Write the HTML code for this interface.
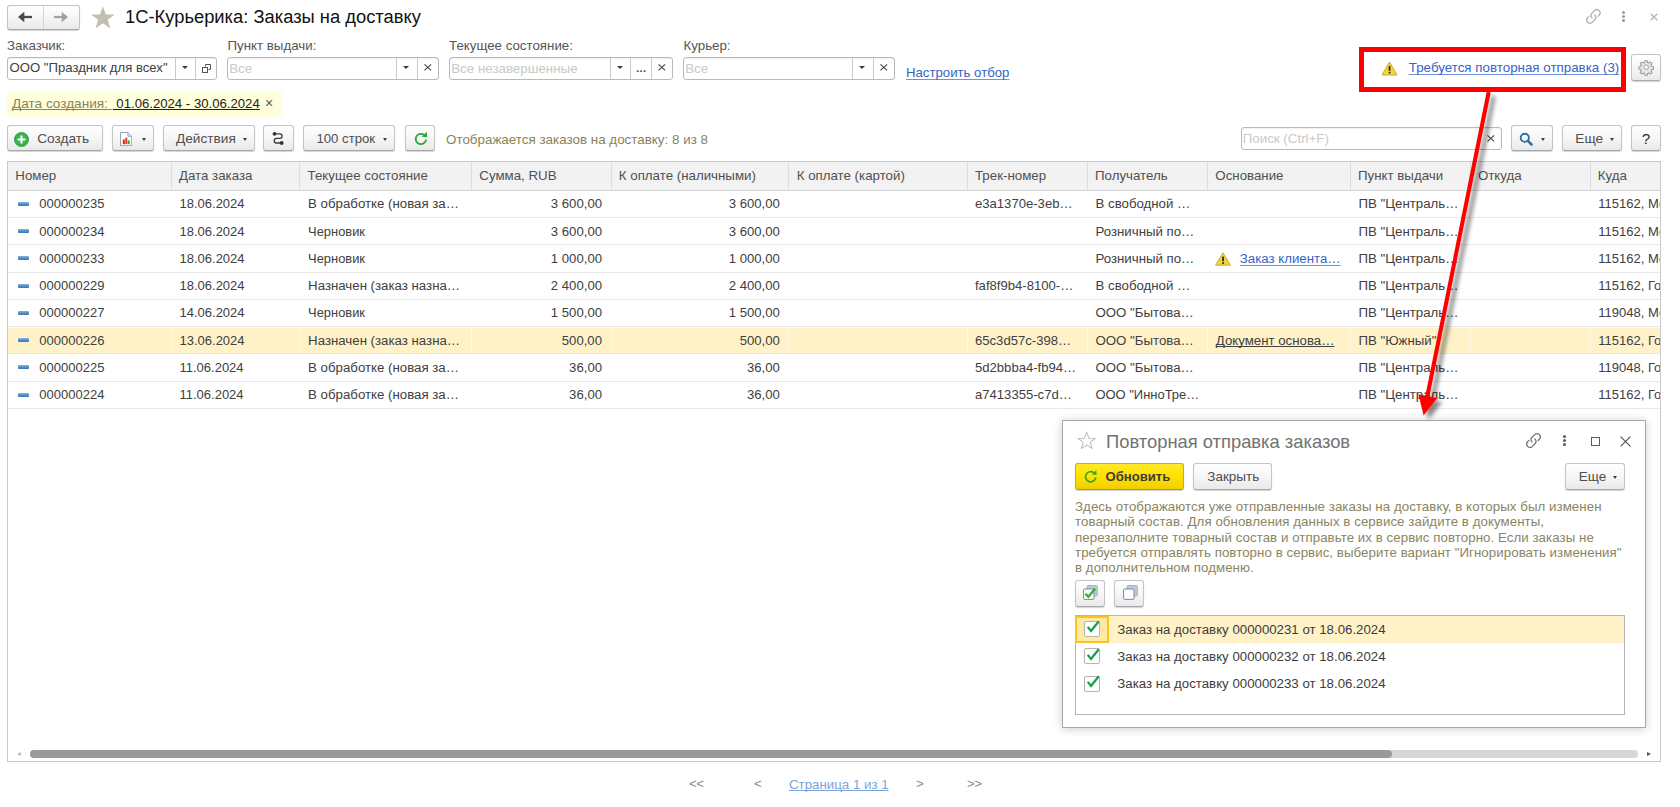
<!DOCTYPE html>
<html lang="ru">
<head>
<meta charset="utf-8">
<title>1С-Курьерика: Заказы на доставку</title>
<style>
*{box-sizing:border-box;margin:0;padding:0;text-decoration-skip-ink:none}
html,body{width:1680px;height:807px;overflow:hidden;background:#fff}
body{font-family:"Liberation Sans",sans-serif;font-size:13.3px;color:#333;position:relative}
.abs{position:absolute}
.btn{position:absolute;border:1px solid #c4c4c4;border-bottom-color:#a9a9a9;border-radius:3px;background:linear-gradient(#ffffff 0%,#f6f6f6 50%,#e9e9e9 100%);box-shadow:0 1px 1px rgba(0,0,0,.18);color:#4e4e4e;white-space:nowrap}
.btn .t{position:absolute;top:0;line-height:25.6px;height:24px}
.tri{position:absolute;width:0;height:0;border-left:3px solid transparent;border-right:3px solid transparent;border-top:3.8px solid #3c3c3c;margin-left:-.4px}
.tri.s{border-left-width:2.8px;border-right-width:2.8px;border-top-width:3.3px}
.xs{position:absolute;overflow:visible}
.xs path{stroke:#484848;stroke-width:1.2;fill:none}
.lbl{position:absolute;color:#555;font-size:13.3px;line-height:16px;white-space:nowrap}
.inp{position:absolute;height:23px;border:1px solid #b9b9b9;border-radius:3px;background:#fff;box-shadow:inset 0 1px 1px rgba(0,0,0,.06)}
.inp .v{position:absolute;left:3px;top:0;line-height:20.4px;white-space:nowrap;color:#404040;font-size:13.15px}
.inp .ph{color:#c9c9c9;font-size:13.35px;line-height:22.4px}
.inp .sep{position:absolute;top:0;bottom:0;width:1px;background:#c9c9c9}
.inp .x{position:absolute;top:0;line-height:20px;font-size:15px;color:#555;width:20px;text-align:center}
.lnk{color:#3465c6;text-decoration:underline;text-underline-offset:1.6px;text-decoration-thickness:1px;text-decoration-color:rgba(52,101,198,.7);cursor:pointer}
.title{position:absolute;left:125px;top:5.4px;font-size:18.35px;line-height:24px;color:#111;white-space:nowrap}
/* table */
.tbl{position:absolute;left:7px;top:161px;width:1654px;height:601px;overflow:hidden;background:#fff}
.tbl:after{content:"";position:absolute;left:0;top:0;right:0;bottom:0;border:1px solid #c8c8c8;pointer-events:none}
.thead{position:absolute;left:0;top:0;width:1654px;height:30px;background:#f2f2f2;border-bottom:1px solid #d2d2d2}
.th{position:absolute;top:0;height:29px;line-height:29.5px;padding-left:7.3px;color:#505050;white-space:nowrap;overflow:hidden;border-left:1px solid #dedede;font-size:13.3px}
.tr{position:absolute;left:0;width:1654px;border-bottom:1px solid #e8e8e8}
.tr.sel{background:#fff2c9;border-bottom-color:#f5e8bd;box-shadow:inset 0 1px 0 #fffaf0}
.td{position:absolute;top:0;height:100%;padding-left:8.8px;white-space:nowrap;overflow:hidden;color:#404040;font-size:13.25px}
.td.sm{font-size:12.9px}
.td.sm2{font-size:12.95px}
.tr.sel .td{box-shadow:inset 1px 0 0 #fff9e6}
.td.r{text-align:right;padding-right:8.5px;padding-left:0;font-size:13.15px}
.td.d,.td.c0{font-size:13px}
.td.tk{font-size:13.1px;padding-left:8.3px}
.ricon{position:absolute;left:11.4px;top:10.5px;width:10.2px;height:4.6px;border-radius:1px;background:linear-gradient(#86b6e0 0%,#5b93cb 45%,#3a73ae 100%)}
.num{position:absolute;left:32.3px}
.warn{position:absolute;left:8px;top:6.5px}
.ul{text-decoration:underline}
.pg{color:#8a8a8a;font-size:13.3px;line-height:16px;white-space:nowrap;letter-spacing:-.5px}
.cb{position:absolute;left:7.8px;width:16px;height:16px;border:1px solid #b4b4b4;border-radius:2px;background:#fff}
.cb svg{position:absolute;left:.8px;top:-1.8px;overflow:visible}
.li{position:absolute;left:41.3px;line-height:17px;white-space:nowrap;color:#3c3c3c;font-size:13.26px}
</style>
</head>
<body>
<!-- navigation -->
<div class="btn" style="left:7px;top:5px;width:73px;height:24.5px">
  <div class="abs" style="left:34.5px;top:0;width:1px;height:23px;background:#d2d2d2"></div>
  <svg class="abs" style="left:9px;top:5px" width="16" height="12" viewBox="0 0 16 12"><path d="M15 6H5" fill="none" stroke="#484848" stroke-width="2.3"/><path d="M7.3 .8v10.4L1 6z" fill="#484848"/></svg>
  <svg class="abs" style="left:45.3px;top:5px" width="16" height="12" viewBox="0 0 16 12"><path d="M1 6h10" fill="none" stroke="#a2a2a2" stroke-width="2.3"/><path d="M8.7 .8v10.4L15 6z" fill="#a2a2a2"/></svg>
</div>
<svg class="abs" style="left:90.2px;top:5.2px" width="25.8" height="24.8" viewBox="0 0 25 24"><path d="M12.5 1.4l2.9 7.9h8.6l-6.9 5.1 2.6 8.3-7.2-5-7.2 5 2.6-8.3L1 9.3h8.6z" fill="#c2beb0"/></svg>
<div class="title">1С-Курьерика: Заказы на доставку</div>

<!-- top-right window icons -->
<svg class="abs" style="left:1584.2px;top:7.2px" width="18.8" height="18.8" viewBox="0 0 17 17"><g fill="none" stroke="#b4b4b4" stroke-width="1.2" stroke-linecap="round"><path d="M7.2 9.8a3 3 0 0 1 0-4.2l2.6-2.6a3 3 0 0 1 4.2 4.2l-1.3 1.3"/><path d="M9.8 7.2a3 3 0 0 1 0 4.2l-2.6 2.6a3 3 0 0 1-4.2-4.2l1.3-1.3"/></g></svg>
<div class="abs" style="left:1622px;top:11px;width:3px;height:3px;border-radius:50%;background:#9a9a9a;box-shadow:0 4px 0 #9a9a9a,0 8px 0 #9a9a9a"></div>
<svg class="abs" style="left:1650px;top:13px" width="8" height="8" viewBox="0 0 8 8"><path d="M.7.7l6.6 6.6M7.3.7L.7 7.3" stroke="#b5b5b5" stroke-width="1.3"/></svg>

<!-- filters -->
<div class="lbl" style="left:7px;top:38px">Заказчик:</div>
<div class="inp" style="left:7px;top:57px;width:210px">
  <span class="v" style="left:1.5px">ООО "Праздник для всех"</span>
  <span class="sep" style="left:167px"></span><span class="tri" style="left:174.4px;top:8px"></span>
  <span class="sep" style="left:187px"></span>
  <svg class="abs" style="left:192.5px;top:5px" width="11" height="11" viewBox="0 0 11 11"><path d="M4.5 3.5V1.5h5v5H7.5" fill="none" stroke="#555" stroke-width="1"/><rect x="1.5" y="4.5" width="5" height="5" fill="#fff" stroke="#555" stroke-width="1"/></svg>
</div>
<div class="lbl" style="left:227.5px;top:38px">Пункт выдачи:</div>
<div class="inp" style="left:227px;top:57px;width:212px">
  <span class="v ph" style="left:1.2px">Все</span>
  <span class="sep" style="left:168px"></span><span class="tri" style="left:175.5px;top:8px"></span>
  <span class="sep" style="left:189px"></span><svg class="xs" style="left:195.8px;top:6px" width="7.6" height="6.8" viewBox="0 0 8 7"><path d="M.5.3l7 6.4M7.5.3l-7 6.4"/></svg>
</div>
<div class="lbl" style="left:449px;top:38px">Текущее состояние:</div>
<div class="inp" style="left:449px;top:57px;width:224px">
  <span class="v ph" style="left:1.2px">Все незавершенные</span>
  <span class="sep" style="left:160px"></span><span class="tri" style="left:167.5px;top:8px"></span>
  <span class="sep" style="left:180px"></span><span class="abs" style="left:186.2px;top:4.3px;font-weight:bold;font-size:11px;line-height:12px;color:#444;letter-spacing:.3px">...</span>
  <span class="sep" style="left:201px"></span><svg class="xs" style="left:207.8px;top:6px" width="7.6" height="6.8" viewBox="0 0 8 7"><path d="M.5.3l7 6.4M7.5.3l-7 6.4"/></svg>
</div>
<div class="lbl" style="left:683.5px;top:38px">Курьер:</div>
<div class="inp" style="left:683px;top:57px;width:211.5px">
  <span class="v ph" style="left:1.2px">Все</span>
  <span class="sep" style="left:168px"></span><span class="tri" style="left:175.5px;top:8px"></span>
  <span class="sep" style="left:188.5px"></span><svg class="xs" style="left:195.5px;top:6px" width="7.6" height="6.8" viewBox="0 0 8 7"><path d="M.5.3l7 6.4M7.5.3l-7 6.4"/></svg>
</div>
<a class="lnk abs" style="left:906px;top:64.5px;line-height:16px;white-space:nowrap;font-size:13.2px">Настроить отбор</a>

<!-- highlighted link -->
<div class="abs" style="left:1359px;top:47px;width:267px;height:45px;border:5px solid #fe0000"></div>
<svg class="abs" style="left:1381px;top:61px" width="17" height="15" viewBox="0 0 17 15"><path d="M8.5 1L16 14H1z" fill="#f3d63c" stroke="#c8a91f" stroke-width="1" stroke-linejoin="round"/><rect x="7.7" y="5" width="1.7" height="4.8" fill="#222"/><rect x="7.7" y="10.8" width="1.7" height="1.7" fill="#222"/></svg>
<a class="lnk abs" style="left:1408.8px;top:60px;line-height:16px;white-space:nowrap;font-size:13.35px">Требуется повторная отправка (3)</a>
<div class="btn" style="left:1631px;top:54px;width:30px;height:26.5px">
  <svg class="abs" style="left:6.2px;top:4.3px" width="16.4" height="16.4" viewBox="0 0 24 24"><path fill="#e6e6e6" stroke="#9a9a9a" stroke-width="1.5" stroke-linejoin="round" d="M10.3 2.5h3.4l.5 2.7 1.9.8 2.3-1.6 2.4 2.4-1.6 2.3.8 1.9 2.7.5v3.4l-2.7.5-.8 1.9 1.6 2.3-2.4 2.4-2.3-1.6-1.9.8-.5 2.7h-3.4l-.5-2.7-1.9-.8-2.3 1.6-2.4-2.4 1.6-2.3-.8-1.9-2.7-.5v-3.4l2.7-.5.8-1.9-1.6-2.3 2.4-2.4 2.3 1.6 1.9-.8z"/><circle cx="12" cy="12" r="3.4" fill="#f6f6f6" stroke="#a0a0a0" stroke-width="1.4"/></svg>
</div>

<!-- date filter chip -->
<div class="abs" style="left:7px;top:90.5px;width:275px;height:26px;background:#ffffdc"></div>
<div class="abs" style="left:12px;top:95px;line-height:16px;white-space:pre;font-size:13.6px"><span style="color:#8a8258;text-decoration:underline">Дата создания: </span><span style="color:#222;text-decoration:underline;font-size:13.17px;margin-left:1px"> 01.06.2024 - 30.06.2024</span><span style="color:#555;font-size:14px;margin-left:1.5px"> ×</span></div>

<!-- toolbar -->
<div class="btn" style="left:7px;top:125px;width:95.5px;height:26px">
  <svg class="abs" style="left:5.7px;top:5.6px" width="15" height="15" viewBox="0 0 15 15"><circle cx="7.5" cy="7.5" r="7.3" fill="#3bb44e"/><circle cx="7.5" cy="7.5" r="6.8" fill="none" stroke="#2e9f42" stroke-width=".9"/><path d="M7.5 3.6v7.8M3.6 7.5h7.8" stroke="#fff" stroke-width="2"/></svg>
  <span class="t" style="left:29.2px;font-size:13.65px">Создать</span>
</div>
<div class="btn" style="left:111.5px;top:125px;width:42.5px;height:26px">
  <svg class="abs" style="left:7.3px;top:5.8px" width="12.2" height="14.1" viewBox="0 0 13 15"><path d="M.5.5h8l4 4v10H.5z" fill="#fff" stroke="#8c9bb0" stroke-width="1"/><path d="M8.5.5v4h4" fill="#e4e9f0" stroke="#8c9bb0" stroke-width="1"/><rect x="3" y="8" width="2.2" height="5" fill="#d9281c"/><rect x="5.6" y="6" width="2.2" height="7" fill="#e0482a"/><rect x="8.2" y="9" width="2.2" height="4" fill="#3aa335"/></svg>
  <span class="tri s" style="left:29.5px;top:11.5px"></span>
</div>
<div class="btn" style="left:162.5px;top:125px;width:92px;height:26px">
  <span class="t" style="left:12.5px;font-size:13.65px">Действия</span><span class="tri s" style="left:80px;top:11.5px"></span>
</div>
<div class="btn" style="left:263px;top:125px;width:30.5px;height:26px">
  <svg class="abs" style="left:8.3px;top:4.7px" width="13" height="15" viewBox="0 0 13 15"><path d="M2.4 2.8h5.4a2.3 2.3 0 0 1 0 4.6H4.5a2.3 2.3 0 0 0 0 4.6h5.2" fill="none" stroke="#3a3a3a" stroke-width="1.3"/><circle cx="2.5" cy="2.8" r="1.9" fill="#333"/><circle cx="9.7" cy="12" r="1.9" fill="#333"/></svg>
</div>
<div class="btn" style="left:302.5px;top:125px;width:92px;height:26px">
  <span class="t" style="left:13px;font-size:13.15px">100 строк</span><span class="tri s" style="left:80px;top:11.5px"></span>
</div>
<div class="btn" style="left:405px;top:125px;width:30px;height:26px">
  <svg class="abs" style="left:7px;top:4.5px" width="16" height="16" viewBox="0 0 16 16"><path d="M13.1 8.6A5.2 5.2 0 1 1 11 3.8" fill="none" stroke="#2ca53a" stroke-width="1.8"/><path d="M8.8 5.7L14.2 6.3 13.7 .8z" fill="#2ca53a"/></svg>
</div>
<div class="abs" style="left:446px;top:131.5px;line-height:16px;white-space:nowrap;color:#8a8258;font-size:13.4px">Отображается заказов на доставку: 8 из 8</div>

<div class="inp" style="left:1240.5px;top:127px;width:261px;height:23px">
  <span class="v ph" style="left:1.2px;line-height:22.4px">Поиск (Ctrl+F)</span>
  <svg class="xs" style="left:245.5px;top:6.8px" width="7.6" height="6.8" viewBox="0 0 8 7"><path d="M.5.3l7 6.4M7.5.3l-7 6.4"/></svg>
</div>
<div class="btn" style="left:1510.5px;top:125px;width:42px;height:26px">
  <svg class="abs" style="left:7.2px;top:6px" width="15" height="15" viewBox="0 0 15 15"><circle cx="5.8" cy="5.8" r="4.1" fill="none" stroke="#2b6ca3" stroke-width="1.9"/><path d="M8.9 8.9l3.6 3.6" stroke="#2b6ca3" stroke-width="2.5" stroke-linecap="round"/></svg>
  <span class="tri s" style="left:29.5px;top:11.5px"></span>
</div>
<div class="btn" style="left:1562px;top:125px;width:60px;height:26px">
  <span class="t" style="left:12.3px;font-size:13.65px">Еще</span><span class="tri s" style="left:47px;top:11.5px"></span>
</div>
<div class="btn" style="left:1631px;top:125px;width:30px;height:26px">
  <span class="t" style="left:0;width:28px;text-align:center;font-weight:normal;color:#2e2e2e;font-size:15.3px;line-height:25px">?</span>
</div>
<div class="tbl">
<div class="thead"></div>
<div class="th" style="left:0px;width:163.7px">Номер</div>
<div class="th" style="left:163.7px;width:128.6px">Дата заказа</div>
<div class="th" style="left:292.3px;width:171.7px">Текущее состояние</div>
<div class="th" style="left:464px;width:139.5px">Сумма, RUB</div>
<div class="th" style="left:603.5px;width:177.9px">К оплате (наличными)</div>
<div class="th" style="left:781.4px;width:178.3px">К оплате (картой)</div>
<div class="th" style="left:959.7px;width:120px">Трек-номер</div>
<div class="th" style="left:1079.7px;width:120.3px">Получатель</div>
<div class="th" style="left:1200px;width:142.7px">Основание</div>
<div class="th" style="left:1342.7px;width:119.9px">Пункт выдачи</div>
<div class="th" style="left:1462.6px;width:119.9px">Откуда</div>
<div class="th" style="left:1582.5px;width:71px">Куда</div>
<div class="tr" style="top:30px;height:27px;line-height:25.9px">
<div class="td c0" style="left:0px;width:163.7px"><i class="ricon"></i><span class="num">000000235</span></div>
<div class="td d" style="left:163.7px;width:128.6px">18.06.2024</div>
<div class="td " style="left:292.3px;width:171.7px">В обработке (новая за…</div>
<div class="td r" style="left:464px;width:139.5px">3 600,00</div>
<div class="td r" style="left:603.5px;width:177.9px">3 600,00</div>
<div class="td " style="left:781.4px;width:178.3px"></div>
<div class="td tk" style="left:959.7px;width:120px">e3a1370e-3eb…</div>
<div class="td " style="left:1079.7px;width:120.3px">В свободной …</div>
<div class="td " style="left:1200px;width:142.7px"></div>
<div class="td " style="left:1342.7px;width:119.9px">ПВ "Централь…</div>
<div class="td " style="left:1462.6px;width:119.9px"></div>
<div class="td last d" style="left:1582.5px;width:71px">115162, Мо</div>
</div>
<div class="tr" style="top:57px;height:27px;line-height:27.7px">
<div class="td c0" style="left:0px;width:163.7px"><i class="ricon"></i><span class="num">000000234</span></div>
<div class="td d" style="left:163.7px;width:128.6px">18.06.2024</div>
<div class="td sm" style="left:292.3px;width:171.7px">Черновик</div>
<div class="td r" style="left:464px;width:139.5px">3 600,00</div>
<div class="td r" style="left:603.5px;width:177.9px">3 600,00</div>
<div class="td " style="left:781.4px;width:178.3px"></div>
<div class="td tk" style="left:959.7px;width:120px"></div>
<div class="td " style="left:1079.7px;width:120.3px">Розничный по…</div>
<div class="td " style="left:1200px;width:142.7px"></div>
<div class="td " style="left:1342.7px;width:119.9px">ПВ "Централь…</div>
<div class="td " style="left:1462.6px;width:119.9px"></div>
<div class="td last d" style="left:1582.5px;width:71px">115162, Мо</div>
</div>
<div class="tr" style="top:84px;height:28px;line-height:27.9px">
<div class="td c0" style="left:0px;width:163.7px"><i class="ricon"></i><span class="num">000000233</span></div>
<div class="td d" style="left:163.7px;width:128.6px">18.06.2024</div>
<div class="td sm" style="left:292.3px;width:171.7px">Черновик</div>
<div class="td r" style="left:464px;width:139.5px">1 000,00</div>
<div class="td r" style="left:603.5px;width:177.9px">1 000,00</div>
<div class="td " style="left:781.4px;width:178.3px"></div>
<div class="td tk" style="left:959.7px;width:120px"></div>
<div class="td " style="left:1079.7px;width:120.3px">Розничный по…</div>
<div class="td base" style="left:1200px;width:142.7px"><svg class="warn" viewBox="0 0 16 14" width="16" height="14"><path d="M8 0.8 L15.4 13.2 H0.6 Z" fill="#f2d43a" stroke="#c9a81c" stroke-width="0.9" stroke-linejoin="round"/><rect x="7.2" y="4.6" width="1.7" height="4.6" fill="#222"/><rect x="7.2" y="10.2" width="1.7" height="1.7" fill="#222"/></svg><a class="lnk" style="margin-left:24px">Заказ клиента…</a></div>
<div class="td " style="left:1342.7px;width:119.9px">ПВ "Централь…</div>
<div class="td " style="left:1462.6px;width:119.9px"></div>
<div class="td last d" style="left:1582.5px;width:71px">115162, Мо</div>
</div>
<div class="tr" style="top:112px;height:27px;line-height:25.5px">
<div class="td c0" style="left:0px;width:163.7px"><i class="ricon"></i><span class="num">000000229</span></div>
<div class="td d" style="left:163.7px;width:128.6px">18.06.2024</div>
<div class="td " style="left:292.3px;width:171.7px">Назначен (заказ назна…</div>
<div class="td r" style="left:464px;width:139.5px">2 400,00</div>
<div class="td r" style="left:603.5px;width:177.9px">2 400,00</div>
<div class="td " style="left:781.4px;width:178.3px"></div>
<div class="td tk" style="left:959.7px;width:120px">faf8f9b4-8100-…</div>
<div class="td " style="left:1079.7px;width:120.3px">В свободной …</div>
<div class="td " style="left:1200px;width:142.7px"></div>
<div class="td " style="left:1342.7px;width:119.9px">ПВ "Централь…</div>
<div class="td " style="left:1462.6px;width:119.9px"></div>
<div class="td last d" style="left:1582.5px;width:71px">115162, Го</div>
</div>
<div class="tr" style="top:139px;height:27px;line-height:25.5px">
<div class="td c0" style="left:0px;width:163.7px"><i class="ricon"></i><span class="num">000000227</span></div>
<div class="td d" style="left:163.7px;width:128.6px">14.06.2024</div>
<div class="td sm" style="left:292.3px;width:171.7px">Черновик</div>
<div class="td r" style="left:464px;width:139.5px">1 500,00</div>
<div class="td r" style="left:603.5px;width:177.9px">1 500,00</div>
<div class="td " style="left:781.4px;width:178.3px"></div>
<div class="td tk" style="left:959.7px;width:120px"></div>
<div class="td " style="left:1079.7px;width:120.3px">ООО "Бытова…</div>
<div class="td " style="left:1200px;width:142.7px"></div>
<div class="td " style="left:1342.7px;width:119.9px">ПВ "Централь…</div>
<div class="td " style="left:1462.6px;width:119.9px"></div>
<div class="td last d" style="left:1582.5px;width:71px">119048, Мо</div>
</div>
<div class="tr sel" style="top:166px;height:27px;line-height:27.7px">
<div class="td c0" style="left:0px;width:163.7px"><i class="ricon"></i><span class="num">000000226</span></div>
<div class="td d" style="left:163.7px;width:128.6px">13.06.2024</div>
<div class="td " style="left:292.3px;width:171.7px">Назначен (заказ назна…</div>
<div class="td r" style="left:464px;width:139.5px">500,00</div>
<div class="td r" style="left:603.5px;width:177.9px">500,00</div>
<div class="td " style="left:781.4px;width:178.3px"></div>
<div class="td tk" style="left:959.7px;width:120px">65c3d57c-398…</div>
<div class="td " style="left:1079.7px;width:120.3px">ООО "Бытова…</div>
<div class="td " style="left:1200px;width:142.7px"><span class="ul">Документ основа…</span></div>
<div class="td " style="left:1342.7px;width:119.9px">ПВ "Южный"</div>
<div class="td " style="left:1462.6px;width:119.9px"></div>
<div class="td last d" style="left:1582.5px;width:71px">115162, Го</div>
</div>
<div class="tr" style="top:193px;height:28px;line-height:28.1px">
<div class="td c0" style="left:0px;width:163.7px"><i class="ricon"></i><span class="num">000000225</span></div>
<div class="td d" style="left:163.7px;width:128.6px">11.06.2024</div>
<div class="td " style="left:292.3px;width:171.7px">В обработке (новая за…</div>
<div class="td r" style="left:464px;width:139.5px">36,00</div>
<div class="td r" style="left:603.5px;width:177.9px">36,00</div>
<div class="td " style="left:781.4px;width:178.3px"></div>
<div class="td tk" style="left:959.7px;width:120px">5d2bbba4-fb94…</div>
<div class="td " style="left:1079.7px;width:120.3px">ООО "Бытова…</div>
<div class="td " style="left:1200px;width:142.7px"></div>
<div class="td " style="left:1342.7px;width:119.9px">ПВ "Централь…</div>
<div class="td " style="left:1462.6px;width:119.9px"></div>
<div class="td last d" style="left:1582.5px;width:71px">119048, Го</div>
</div>
<div class="tr" style="top:221px;height:27px;line-height:25.3px">
<div class="td c0" style="left:0px;width:163.7px"><i class="ricon"></i><span class="num">000000224</span></div>
<div class="td d" style="left:163.7px;width:128.6px">11.06.2024</div>
<div class="td " style="left:292.3px;width:171.7px">В обработке (новая за…</div>
<div class="td r" style="left:464px;width:139.5px">36,00</div>
<div class="td r" style="left:603.5px;width:177.9px">36,00</div>
<div class="td " style="left:781.4px;width:178.3px"></div>
<div class="td tk" style="left:959.7px;width:120px">a7413355-c7d…</div>
<div class="td sm2" style="left:1079.7px;width:120.3px">ООО "ИнноТре…</div>
<div class="td " style="left:1200px;width:142.7px"></div>
<div class="td " style="left:1342.7px;width:119.9px">ПВ "Централь…</div>
<div class="td " style="left:1462.6px;width:119.9px"></div>
<div class="td last d" style="left:1582.5px;width:71px">115162, Го</div>
</div>
</div><!-- scrollbar + pager -->
<div class="abs" style="left:30px;top:750px;width:1608px;height:8px;border-radius:4px;background:#d7d7d7"></div>
<div class="abs" style="left:30px;top:750px;width:1362px;height:8px;border-radius:4px;background:#9a9a9a"></div>
<div class="abs" style="left:16.5px;top:751.5px;width:0;height:0;border-top:2.5px solid transparent;border-bottom:2.5px solid transparent;border-right:4px solid #bdbdbd"></div>
<div class="abs" style="left:1647px;top:752px;width:0;height:0;border-top:2.5px solid transparent;border-bottom:2.5px solid transparent;border-left:4px solid #555"></div>

<div class="abs pg" style="left:689px;top:775.5px">&lt;&lt;</div>
<div class="abs pg" style="left:754px;top:775.5px">&lt;</div>
<a class="abs" style="left:789px;top:777px;line-height:16px;white-space:nowrap;color:#7aa3dc;text-decoration:underline;font-size:13.3px">Страница 1 из 1</a>
<div class="abs pg" style="left:916px;top:775.5px">&gt;</div>
<div class="abs pg" style="left:967px;top:775.5px">&gt;&gt;</div>

<!-- popup window -->
<div class="abs" id="popup" style="left:1062px;top:420px;width:584px;height:307.5px;background:#fff;border:1px solid #a8a8a8;box-shadow:0 1px 9px rgba(0,0,0,.2)">
  <svg class="abs" style="left:13.5px;top:9.8px" width="19.4" height="18.2" viewBox="0 0 19 18"><path d="M9.5 1.3l2.3 5.8 6.1.3-4.8 3.9 1.7 6-5.3-3.4-5.3 3.4 1.7-6L1.1 7.4l6.1-.3z" fill="#fff" stroke="#bdbdbd" stroke-width="1"/></svg>
  <div class="abs" style="left:43px;top:8.7px;font-size:18.36px;line-height:24px;color:#727272;white-space:nowrap">Повторная отправка заказов</div>
  <svg class="abs" style="left:461.3px;top:9.6px" width="19" height="19" viewBox="0 0 17 17"><g fill="none" stroke="#707070" stroke-width="1.1" stroke-linecap="round"><path d="M7.2 9.8a3 3 0 0 1 0-4.2l2.6-2.6a3 3 0 0 1 4.2 4.2l-1.3 1.3"/><path d="M9.8 7.2a3 3 0 0 1 0 4.2l-2.6 2.6a3 3 0 0 1-4.2-4.2l1.3-1.3"/></g></svg>
  <div class="abs" style="left:500px;top:13.6px;width:3px;height:3px;border-radius:50%;background:#5c5c5c;box-shadow:0 4px 0 #5c5c5c,0 8px 0 #5c5c5c"></div>
  <div class="abs" style="left:527.5px;top:15.5px;width:9.6px;height:9.6px;border:1.1px solid #5a5a5a"></div>
  <svg class="abs" style="left:556.5px;top:14.5px" width="11" height="11" viewBox="0 0 11 11"><path d="M.6.6l9.8 9.8M10.4.6L.6 10.4" stroke="#555" stroke-width="1.2"/></svg>

  <div class="btn" style="left:12px;top:42px;width:108.7px;height:26.5px;background:linear-gradient(#ffe92a 0%,#ffe200 45%,#f2cf00 100%);border-color:#cfae00;border-bottom-color:#b99a00">
    <svg class="abs" style="left:7px;top:5px" width="15.5" height="15.5" viewBox="0 0 16 16"><path d="M13.2 8.6A5.3 5.3 0 1 1 11.3 3.9" fill="none" stroke="#3aa52a" stroke-width="1.7"/><path d="M9.2 5.8L14 6.2 13.7 1.2z" fill="#3aa52a"/></svg>
    <span class="t" style="left:29.5px;font-weight:bold;color:#3c3c3c;font-size:13.1px;line-height:26px">Обновить</span>
  </div>
  <div class="btn" style="left:130px;top:42px;width:79px;height:26.5px"><span class="t" style="left:13.3px;line-height:26px;font-size:13.5px">Закрыть</span></div>
  <div class="btn" style="left:502px;top:42px;width:60px;height:26.5px"><span class="t" style="left:12.8px;line-height:26px;font-size:13.5px">Еще</span><span class="tri" style="left:47px;top:12px;border-left-width:2.5px;border-right-width:2.5px;border-top-width:3px"></span></div>

  <div class="abs" style="left:12px;top:78px;width:560px;font-size:13.3px;line-height:15.25px;color:#8b8560;letter-spacing:.05px;white-space:nowrap">Здесь отображаются уже отправленные заказы на доставку, в которых был изменен<br>товарный состав. Для обновления данных в сервисе зайдите в документы,<br>перезаполните товарный состав и отправьте их в сервис повторно. Если заказы не<br>требуется отправлять повторно в сервис, выберите вариант "Игнорировать изменения"<br>в дополнительном подменю.</div>

  <div class="btn" style="left:12px;top:159px;width:30px;height:26.5px">
    <svg class="abs" style="left:6.9px;top:4.4px" width="15" height="15" viewBox="0 0 15 15"><rect x="4" y=".6" width="10.3" height="10.3" rx="1" fill="#bfcbd7" stroke="#9aacbe" stroke-width=".9"/><rect x=".6" y="4" width="10.4" height="10.4" rx="1" fill="#fff" stroke="#6f8baa" stroke-width="1"/><path d="M2.3 8.7l3.1 3.1 6.8-8.3" fill="none" stroke="#2db42f" stroke-width="2.3"/></svg>
  </div>
  <div class="btn" style="left:51px;top:159px;width:30px;height:26.5px">
    <svg class="abs" style="left:7.7px;top:4.4px" width="15" height="15" viewBox="0 0 15 15"><rect x="4" y=".6" width="10.3" height="10.3" rx="1" fill="#bfcbd7" stroke="#9aacbe" stroke-width=".9"/><rect x=".6" y="4" width="10.4" height="10.4" rx="1" fill="#fff" stroke="#6f8baa" stroke-width="1"/></svg>
  </div>

  <div class="abs" style="left:12px;top:194px;width:550.4px;height:100px;border:1px solid #b5b5b5;background:#fff">
    <div class="abs" style="left:0;top:0;width:548.4px;height:27px;background:#fff2c9"></div>
    <div class="abs" style="left:-1px;top:0;width:33.6px;height:27px;background:#ffe9a3;border:2px solid #f7c325"></div>
    <div class="cb" style="top:5px"><svg width="14" height="14" viewBox="0 0 14 14"><path d="M1.7 6.9l3.3 4L12.8 1.3" fill="none" stroke="#12a04a" stroke-width="2.2"/></svg></div><div class="li" style="top:4.5px">Заказ на доставку 000000231 от 18.06.2024</div>
    <div class="cb" style="top:32.4px"><svg width="14" height="14" viewBox="0 0 14 14"><path d="M1.7 6.9l3.3 4L12.8 1.3" fill="none" stroke="#12a04a" stroke-width="2.2"/></svg></div><div class="li" style="top:31.6px">Заказ на доставку 000000232 от 18.06.2024</div>
    <div class="cb" style="top:59.8px"><svg width="14" height="14" viewBox="0 0 14 14"><path d="M1.7 6.9l3.3 4L12.8 1.3" fill="none" stroke="#12a04a" stroke-width="2.2"/></svg></div><div class="li" style="top:58.9px">Заказ на доставку 000000233 от 18.06.2024</div>
  </div>
</div>

<!-- annotation arrow -->
<svg class="abs" style="left:1380px;top:80px;overflow:visible" width="140" height="350" viewBox="1380 80 140 350">
  <defs><filter id="sh" x="-50%" y="-10%" width="200%" height="120%"><feGaussianBlur in="SourceAlpha" stdDeviation="2.3"/><feOffset dx="4.8" dy="3.5"/><feComponentTransfer><feFuncA type="linear" slope=".47"/></feComponentTransfer><feMerge><feMergeNode/><feMergeNode in="SourceGraphic"/></feMerge></filter></defs>
  <g filter="url(#sh)"><path d="M1488.7 92L1427.2 397" stroke="#fe0000" stroke-width="4.05" fill="none"/><path d="M1418.3 394.3L1437.3 398.1L1423.6 415.5z" fill="#fe0000"/></g>
</svg>
</body>
</html>
